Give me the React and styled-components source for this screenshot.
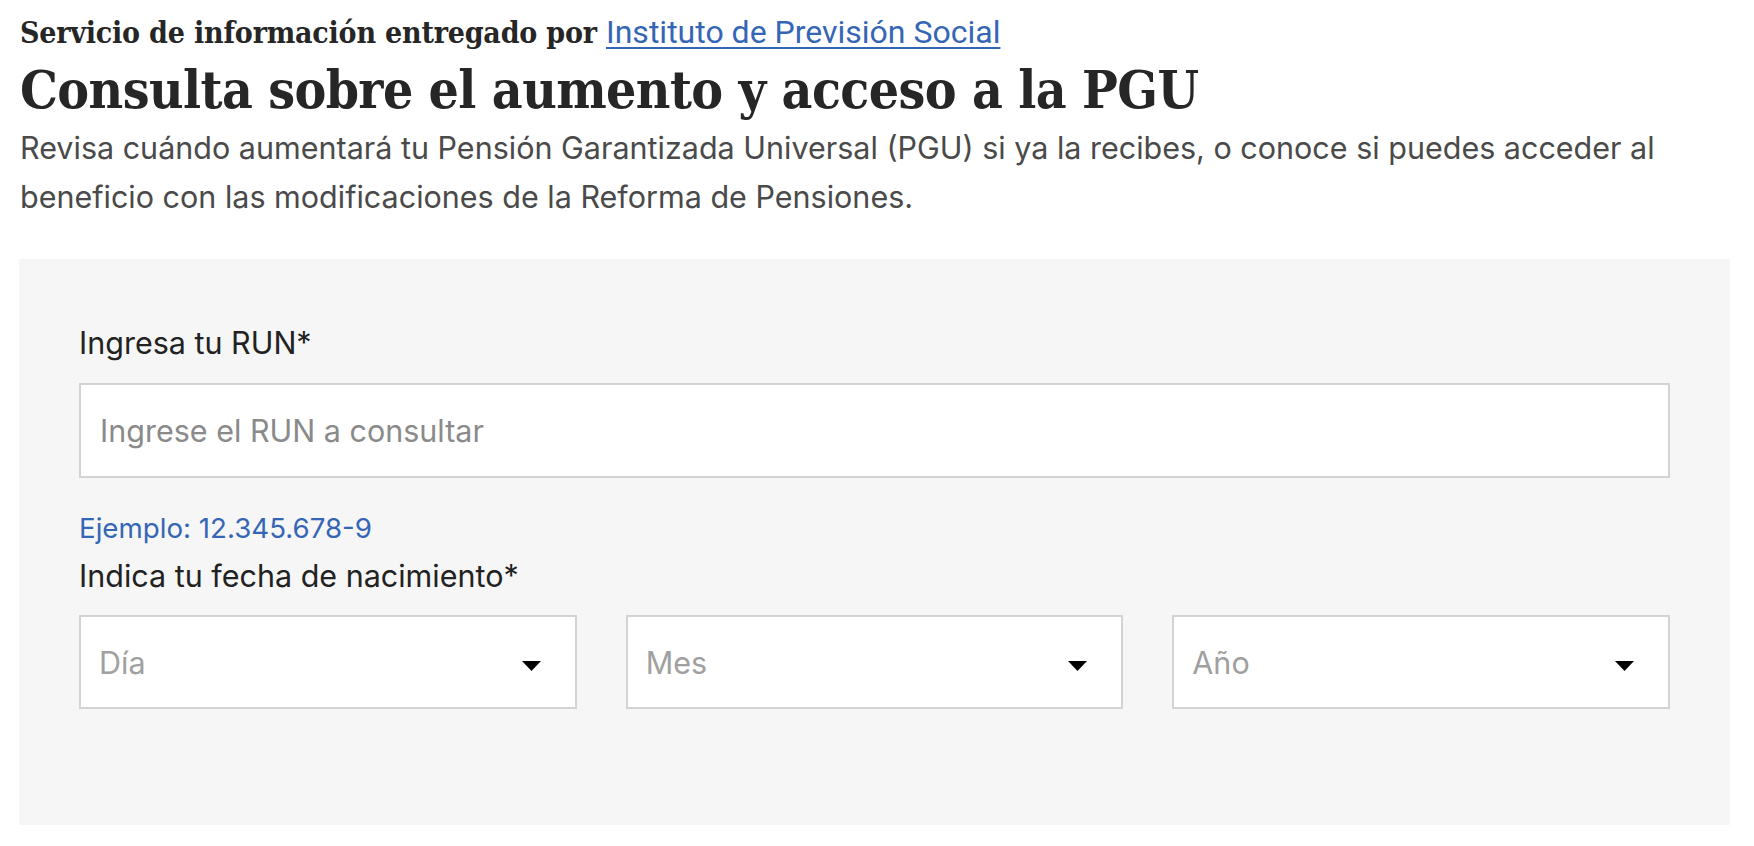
import React from 'react';
import styled, { createGlobalStyle } from 'styled-components';

const GlobalStyle = createGlobalStyle`
    html, body {
        margin: 0;
        padding: 0;
        background: #ffffff;
    }
    body {
        font-family: Inter, "Noto Sans", "Liberation Sans", Arial, sans-serif;
        color: #222222;
    }
`;

const Page = styled.main`
    padding: 14px 24px 20px 19px;
    box-sizing: border-box;
`;

const Provider = styled.p`
    margin: 0;
    font-family: "DejaVu Serif", "Liberation Serif", serif;
    font-weight: bold;
    font-stretch: condensed;
    font-size: 30px;
    line-height: 36px;
    letter-spacing: -0.2px;
    color: #262626;
    padding-left: 1px;
`;

const ProviderLink = styled.a`
    font-family: Roboto, "Liberation Sans", sans-serif;
    font-weight: 400;
    font-stretch: normal;
    font-size: 32px;
    letter-spacing: 0;
    color: #3566b6;
    text-decoration: underline;
    text-decoration-thickness: 2px;
    text-underline-offset: 4px;
`;

const Title = styled.h1`
    margin: 7px 0 0;
    font-family: "DejaVu Serif", "Liberation Serif", serif;
    font-weight: bold;
    font-stretch: condensed;
    font-size: 53px;
    line-height: 62px;
    letter-spacing: -0.6px;
    color: #262626;
    padding-left: 1px;
`;

const Intro = styled.p`
    margin: 3px 0 38px;
    font-size: 30.5px;
    line-height: 49px;
    color: #4a4a4a;
    padding-left: 1px;
    max-width: 1700px;
`;

const Panel = styled.section`
    background: #f6f6f6;
    padding: 66px 60px 116px;
    width: 1711px;
    box-sizing: border-box;
`;

const FieldLabel = styled.label`
    display: block;
    font-size: 30.5px;
    line-height: 36px;
    color: #222222;
    margin-bottom: ${(p) => p.$gap || 0}px;
`;

const TextInput = styled.input`
    display: block;
    width: 100%;
    height: 95px;
    box-sizing: border-box;
    border: 2px solid #d3d3d3;
    background: #ffffff;
    padding: 0 19px;
    font-family: Inter, "Noto Sans", sans-serif;
    font-size: 30.5px;
    color: #222222;
    outline: none;

    &::placeholder {
        color: #8a8a8a;
    }
`;

const Hint = styled.div`
    margin-top: 34px;
    font-size: 27.7px;
    line-height: 32px;
    color: #3566b6;
    margin-bottom: 14px;
`;

const DateRow = styled.div`
    display: grid;
    grid-template-columns: repeat(3, 1fr);
    column-gap: 49px;
    margin-top: 21px;
`;

const SelectBox = styled.div`
    height: 94px;
    box-sizing: border-box;
    border: 2px solid #d3d3d3;
    background: #ffffff;
    display: flex;
    align-items: center;
    justify-content: space-between;
    padding: 0 34px 0 18px;
    cursor: pointer;
`;

const SelectText = styled.span`
    font-size: 30.5px;
    color: #a0a0a0;
`;

const Caret = styled.svg`
    width: 19px;
    height: 10px;
    margin-top: 8px;
    flex-shrink: 0;
`;

const fechas = ['Día', 'Mes', 'Año'];

const Dropdown = ({ placeholder }) => (
    <SelectBox role="combobox" aria-label={placeholder}>
        <SelectText>{placeholder}</SelectText>
        <Caret viewBox="0 0 19 10">
            <path d="M0 0 H19 L9.5 10 Z" fill="#000000" />
        </Caret>
    </SelectBox>
);

const App = () => {
    return (
        <>
            <GlobalStyle />
            <Page>
                <Provider>
                    Servicio de información entregado por{' '}
                    <ProviderLink href="#">Instituto de Previsión Social</ProviderLink>
                </Provider>
                <Title>Consulta sobre el aumento y acceso a la PGU</Title>
                <Intro>
                    Revisa cuándo aumentará tu Pensión Garantizada Universal (PGU) si ya la recibes, o
                    conoce si puedes acceder al beneficio con las modificaciones de la Reforma de
                    Pensiones.
                </Intro>
                <Panel>
                    <FieldLabel htmlFor="run" $gap={22}>Ingresa tu RUN*</FieldLabel>
                    <TextInput id="run" placeholder="Ingrese el RUN a consultar" />
                    <Hint>Ejemplo: 12.345.678-9</Hint>
                    <FieldLabel>Indica tu fecha de nacimiento*</FieldLabel>
                    <DateRow>
                        {fechas.map((f) => (
                            <Dropdown key={f} placeholder={f} />
                        ))}
                    </DateRow>
                </Panel>
            </Page>
        </>
    );
};

export default App;
